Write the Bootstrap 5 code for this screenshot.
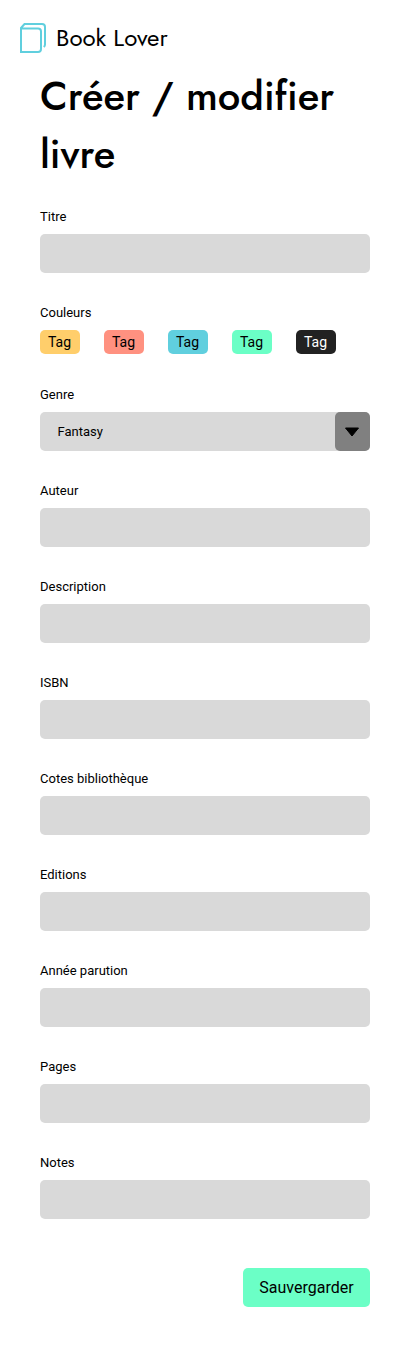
<!DOCTYPE html>
<html lang="fr">
<head>
<meta charset="utf-8">
<meta name="viewport" content="width=device-width, initial-scale=1">
<title>Book Lover</title>
<link rel="stylesheet" href="https://cdn.jsdelivr.net/npm/bootstrap@5.3.0/dist/css/bootstrap.min.css">
<style>
body{font-family:Roboto,sans-serif;color:#000;background:#fff;min-height:1355px}
.brand-bar{height:67px;padding:23px 20px 0;gap:10px}
.brand-name{font:400 24px/30px Jost,Lato,sans-serif;white-space:nowrap}
.page{padding:0 42px 48px 40px}
.page h1{font:500 40px/58px Jost,Lato,sans-serif;margin:0 0 26px}
.field{margin-bottom:32px}
.field-tags{margin-bottom:33px}
.form-label{display:block;font-size:13px;line-height:15px;margin:0 0 10px}
.form-control,.choice{height:39px;border:0;border-radius:5px;background:#d9d9d9}
.choice{font-size:13px;padding-left:17.5px;color:#000}
.choice-arrow{width:35.5px;height:39px;border-radius:5px;background:#808080;border:0;padding:0 1px 0 0}
.tag{width:40px;height:24px;border-radius:5px;font-size:14px;line-height:24px;padding-left:8px;color:#000}
.yellow{background:#ffce6b}.coral{background:#ff9180}.cyan{background:#60cfde}.mint{background:#6bffc6}.ink{background:#222;color:#fff}
.save{width:127px;height:39px;border-radius:5px;padding:0;margin-top:17px;font-size:16px;color:#000;background:#6bffc6;border:0}
</style>
</head>
<body>
<header class="brand-bar d-flex align-items-start">
<svg width="26" height="30" viewBox="0 0 26 30" fill="none" stroke="#60cfde" stroke-width="2"><path d="M1 5.500H18Q21 5.500 21 8.500V26Q21 29 18 29H1V5L4.500 1H22Q25 1 25 4V21.500Q25 23 23.800 24"/></svg>
<span class="brand-name">Book Lover</span>
</header>
<main class="page">
<h1>Créer / modifier<br>livre</h1>
<form>
<div class="field"><label class="form-label" for="titre">Titre</label><input class="form-control" id="titre"></div>
<div class="field-tags"><span class="form-label">Couleurs</span>
<div class="d-flex gap-4"><span class="tag yellow">Tag</span><span class="tag coral">Tag</span><span class="tag cyan">Tag</span><span class="tag mint">Tag</span><span class="tag ink">Tag</span></div></div>
<div class="field"><span class="form-label">Genre</span>
<div class="choice d-flex align-items-center justify-content-between"><span>Fantasy</span><button type="button" class="choice-arrow d-flex align-items-center justify-content-center" aria-label="Genre"><svg width="16" height="10" viewBox="0 0 16 10"><path d="M1.500 1H14.500L8 9Z" stroke="#000" stroke-linejoin="round"/></svg></button></div></div>
<div class="field"><label class="form-label" for="auteur">Auteur</label><input class="form-control" id="auteur"></div>
<div class="field"><label class="form-label" for="desc">Description</label><input class="form-control" id="desc"></div>
<div class="field"><label class="form-label" for="isbn">ISBN</label><input class="form-control" id="isbn"></div>
<div class="field"><label class="form-label" for="cotes">Cotes bibliothèque</label><input class="form-control" id="cotes"></div>
<div class="field"><label class="form-label" for="editions">Editions</label><input class="form-control" id="editions"></div>
<div class="field"><label class="form-label" for="annee">Année parution</label><input class="form-control" id="annee"></div>
<div class="field"><label class="form-label" for="pages">Pages</label><input class="form-control" id="pages"></div>
<div class="field"><label class="form-label" for="notes">Notes</label><input class="form-control" id="notes"></div>
<div class="d-flex justify-content-end"><button type="button" class="btn save">Sauvergarder</button></div>
</form>
</main>
<script src="https://cdn.jsdelivr.net/npm/bootstrap@5.3.0/dist/js/bootstrap.bundle.min.js"></script>
</body>
</html>
